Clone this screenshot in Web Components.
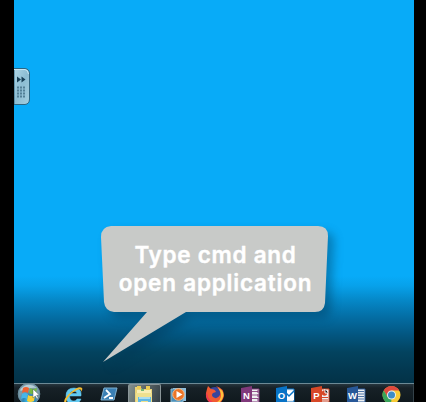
<!DOCTYPE html>
<html lang="en"><head><meta charset="utf-8"><title>Desktop</title>
<style>html,body{margin:0;height:100%;overflow:hidden;background:#000}</style></head>
<body><desktop-screen>
<gadget-handle slot="items"></gadget-handle>
<speech-bubble slot="items"><span>Type cmd and</span><span slot="second">open application</span></speech-bubble>
<task-bar slot="bar">
<task-icon name="start"></task-icon><task-icon name="ie"></task-icon><task-icon name="shell"></task-icon><task-icon name="files" active></task-icon><task-icon name="media"></task-icon><task-icon name="firefox"></task-icon><task-icon name="onenote"></task-icon><task-icon name="outlook"></task-icon><task-icon name="powerpoint"></task-icon><task-icon name="word"></task-icon><task-icon name="chrome"></task-icon>
</task-bar></desktop-screen>
<script>
function define(name, html, init){
  customElements.define(name, class extends HTMLElement{
    constructor(){super();this.attachShadow({mode:'open'}).innerHTML=html;}
    connectedCallback(){if(init)init(this);}
  });
}
define('desktop-screen',`<style>
:host{display:flex;flex-direction:column;position:relative;box-sizing:border-box;width:400px;height:402px;margin-left:14px;overflow:hidden;
background:linear-gradient(#08abf8 0,#08abf8 276px,#07a1ea 286px,#0588c8 300px,#046fa6 316px,#035782 334px,#03435f 352px,#033850 370px,#033247 383px)}
.space{flex:1}</style><div class="space"><slot name="items"></slot></div><slot name="bar"></slot>`);
define('gadget-handle',`<style>:host{display:block;position:absolute;left:0;top:68px;width:16px;height:37px}svg{display:block}</style>
<svg width="16" height="37"><defs><linearGradient id="g" x2="1" y2="1"><stop stop-color="#b0d6e6"/><stop offset=".5" stop-color="#8cbdd3"/><stop offset="1" stop-color="#a5cfe0"/></linearGradient></defs>
<path d="M0 .5H11Q15.500 1 15.500 6V31Q15.500 36 11 36.500H0Z" fill="url(#g)" stroke="#2b6683"/><path d="M0 1.500H11Q14 2 14.500 6" fill="none" stroke="#c9e7f2"/>
<path d="M3 8.500l4 3-4 3zM7.500 8.500l4 3-4 3z" fill="#173f56"/>
<path d="M3 19.500h9M3 22.500h9M3 25.500h9M3 28.500h9" stroke="#527f96" stroke-width="2" stroke-dasharray="2 1"/></svg>`);
define('speech-bubble',`<style>
:host{display:block;position:absolute;left:86px;top:225px;width:240px;height:145px;font:600 22.500px/28px Inter,"Open Sans",sans-serif;color:#fff}
svg{position:absolute;inset:0;overflow:visible;filter:drop-shadow(6px 6px 5px #00304e60)}
.text{position:relative;display:flex;flex-direction:column;align-items:center;width:231px;padding-top:16px;white-space:nowrap;-webkit-text-stroke:.4px #fff}
.first{letter-spacing:.72px}.second{letter-spacing:.8px}</style>
<svg width="240" height="145"><path d="M11 1H218Q228 1 228 11L225 78Q224 87 215 87H86L3 137L47 87H14Q5 86 4 77L1 12Q1 2 11 1Z" fill="#c8cac8"/></svg>
<div class="text"><span class="first"><slot></slot></span><span class="second"><slot name="second"></slot></span></div>`);
define('task-bar',`<style>:host{display:flex;box-sizing:border-box;height:19px;overflow:hidden;border-top:1px solid #6c8995;background:linear-gradient(#26353d,#172127 4px,#10191e);padding-left:3px}
.edge{margin-left:auto;width:1px;background:#344148}</style><slot></slot><i class="edge"></i>`);
const office=(c,l,d)=>`<path d="M9 4h9v13H9z" fill="#eef0f2" stroke="${c}"/>${d}<path d="M0 3l11-2v18L0 17z" fill="${c}"/><text x="5.400" y="13.500" text-anchor="middle" font-family="Liberation Sans" font-weight="700" font-size="9.500" fill="#fff">${l}</text>`;
const art={
start:[15,-2,24,`<defs><radialGradient id="o" cy=".85"><stop stop-color="#3fd0f8"/><stop offset=".55" stop-color="#2b86b8"/><stop offset="1" stop-color="#7b9aa8"/></radialGradient></defs><circle cx="12" cy="12" r="10.800" fill="url(#o)" stroke="#6a8f9f"/><path d="M3.500 7Q11-1 20 6Q12 5 3.500 9Z" fill="#c4dae1" opacity=".8"/><path d="M6 6q3-2 6 0l-1 5q-3-2-6 0z" fill="#ee6232"/><path d="M13 6q3 2 7 0l-1 5q-4 2-7 0z" fill="#74b943"/><path d="M5 12q3-2 6 0l-1 5q-3-2-6 0z" fill="#45b6ea"/><path d="M11 13q3 2 7 0l-1 6q-4 2-7 0z" fill="#f7cf36"/><path d="M16 7v9l2.300-2 1.700 3 1.300-.8-1.600-3h2.800z" fill="#fff" stroke="#31434a" stroke-width=".4"/>`],
ie:[64,1,20,`<path d="M17 11H5.500Q5.700 16 10 16Q12 16 13 14H17Q15 19 10 19Q2 19 2 11Q2 3 10 3Q18 3 17 11ZM6 8.500H13Q12.500 6 9.500 6Q6.500 6 6 8.500Z" fill="#62c9f1" stroke="#62c9f1" stroke-width=".5"/><path d="M1 19Q-2 15 6 8Q15 0 18 3Q19 4 17 7Q18 3 13 5Q3 10 2 18Z" fill="#f3bd32"/>`],
shell:[100,3,18,`<path d="M4 1H17L14 13H1Z" fill="#3b80b4" stroke="#7fb0cf"/><path d="M6 3l4 4-6 4M9 11h4" stroke="#fff" stroke-width="1.800" fill="none"/>`],
files:[134,1,20,`<path d="M1 2h5l2 2h10v16H1z" fill="#ead37a"/><path d="M3 1h4v3H3zM12 1h4v4h-4z" fill="#edce55"/><path d="M3 5h14v4H3z" fill="#f8eeb5"/><path d="M7 4h3v2H7z" fill="#72b974"/><path d="M2 8h16v11H2z" fill="#eee08f"/><path d="M4 12h13v8h-3v-4H7v4H4z" fill="#60b9e6"/><path d="M5 12h11v2H5z" fill="#a9dcf0"/>`],
media:[170,2,18,`<path d="M3 2h13v13H3z" fill="#8ebede"/><path d="M1 3h12v13H1z" fill="#4b91bd" stroke="#91bbcf"/><circle cx="8.500" cy="8.500" r="5.800" fill="#ed7427" stroke="#f9ba83"/><path d="M6.500 5l6 3.500-6 3.500z" fill="#fff"/>`],
firefox:[205,1,20,`<circle cx="10" cy="10" r="8" fill="#38459b"/><path d="M2 4L3 1L6 4Q10 4 11 7L8 8Q6 10 8 12Q12 15 15 10Q16 5 11 1Q19 3 19 11Q17 20 9 19Q0 17 1 8Z" fill="#f15a32"/><path d="M13 3Q20 6 18 12Q16 19 9 18Q15 17 16 11Q16 6 13 3Z" fill="#ffc33c"/><path d="M2 7Q2 17 12 18Q3 21 1 10Z" fill="#ed3357"/>`],
onenote:[241,1,20,office('#80397b','N','<path d="M11 6.500h6M11 10h6M11 13.500h6" stroke="#96588f"/><path d="M17 5v12" stroke="#80397b" stroke-dasharray="3 1"/>')],
outlook:[276,1,20,office('#0873c6','O','<path d="M9 6h9v9H9z" fill="#fff"/><path d="M9 7l4 4 5-5" fill="none" stroke="#0873c6" stroke-width="1.500"/>')],
powerpoint:[311,1,20,office('#d74827','P','<circle cx="13.500" cy="8" r="2.700" fill="#d74827"/><path d="M14 4v4h3" stroke="#fff"/><path d="M11 12.500h6M11 15h6" stroke="#d74827"/>')],
word:[347,1,20,office('#285898','W','<path d="M11 6.500h6M11 9h6M11 11.500h6M11 14h6" stroke="#4f76a9"/>')],
chrome:[382,1,20,`<circle cx="9.500" cy="10" r="9" fill="#f8cb35"/><path d="M1.700 5.500A9 9 0 0 1 17.300 5.500H9.500L5.600 12Z" fill="#df493e"/><path d="M1.700 5.500L6 12.500L9.500 14L9 19A9 9 0 0 1 1.700 5.500Z" fill="#38a45b"/><circle cx="9.500" cy="10" r="4.500" fill="#e8f0ef"/><circle cx="9.500" cy="10" r="3.500" fill="#3c8cc7"/>`]};
define('task-icon',`<style>:host{display:block;position:relative;flex:0 0 35.300px;height:18px}
:host([active])::before{content:"";position:absolute;left:5px;top:0;width:31px;height:19px;border:1px solid #8b9699;border-bottom:0;border-radius:2px 2px 0 0;background:linear-gradient(110deg,#84918f,#5a6567 48%,#323d43)}
svg{position:absolute;display:block}</style><svg></svg>`,el=>{
  const [x,y,size,drawing]=art[el.getAttribute('name')];
  const svg=el.shadowRoot.querySelector('svg');
  const index=[...el.parentElement.children].indexOf(el);
  svg.setAttribute('width',size);svg.setAttribute('height',size);
  svg.style.left=index?(x-17-35.3*index)+'px':'0';
  svg.style.top=y+'px';svg.innerHTML=drawing;
});
</script></body></html>
